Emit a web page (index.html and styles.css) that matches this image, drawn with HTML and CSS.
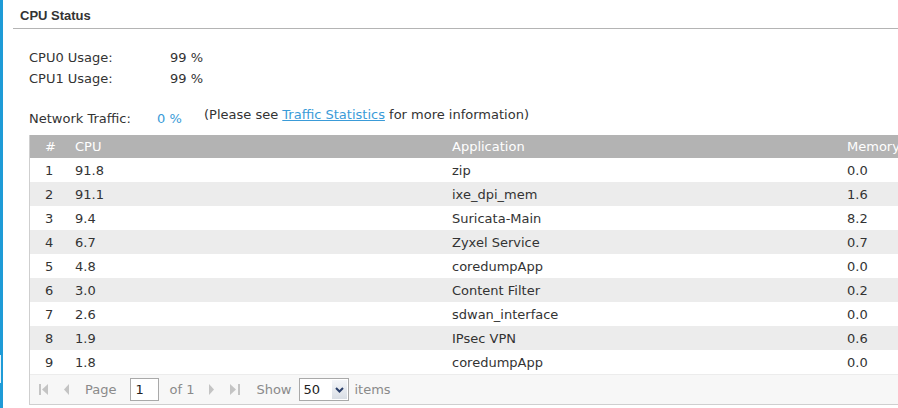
FILE: index.html
```html
<!DOCTYPE html>
<html lang="en">

<head>
    <meta charset="UTF-8">
    <link rel="stylesheet" href="styles.css">
    <title>CPU Status</title>
</head>

<body>
    <div class="page">
        <span class="bar-handle"></span>
        <div class="panel">
            <div class="panel-head">CPU Status</div>
            <div class="panel-body">
                <div class="usage">
                    <span>CPU0 Usage:</span><span>99 %</span>
                    <span>CPU1 Usage:</span><span>99 %</span>
                </div>
                <div class="traffic">
                    <span class="traffic-label">Network Traffic:</span>
                    <span class="traffic-value">0 %</span>
                    <span class="traffic-note">(Please see <a href="#">Traffic Statistics</a> for more information)</span>
                </div>
                <div class="grid">
                    <table>
                        <colgroup>
                            <col style="width: 30px">
                            <col style="width: 377px">
                            <col style="width: 395px">
                            <col>
                        </colgroup>
                        <thead>
                            <tr><th>#</th><th>CPU</th><th>Application</th><th>Memory</th></tr>
                        </thead>
                        <tbody>
                            <tr><td>1</td><td>91.8</td><td>zip</td><td>0.0</td></tr>
                            <tr><td>2</td><td>91.1</td><td>ixe_dpi_mem</td><td>1.6</td></tr>
                            <tr><td>3</td><td>9.4</td><td>Suricata-Main</td><td>8.2</td></tr>
                            <tr><td>4</td><td>6.7</td><td>Zyxel Service</td><td>0.7</td></tr>
                            <tr><td>5</td><td>4.8</td><td>coredumpApp</td><td>0.0</td></tr>
                            <tr><td>6</td><td>3.0</td><td>Content Filter</td><td>0.2</td></tr>
                            <tr><td>7</td><td>2.6</td><td>sdwan_interface</td><td>0.0</td></tr>
                            <tr><td>8</td><td>1.9</td><td>IPsec VPN</td><td>0.6</td></tr>
                            <tr><td>9</td><td>1.8</td><td>coredumpApp</td><td>0.0</td></tr>
                        </tbody>
                    </table>
                    <div class="pager">
                        <svg class="pg-first" width="9" height="11" viewBox="0 0 9 11"><rect x="0" y="0" width="2" height="11"/><path d="M9 0 L3 5.5 L9 11 Z"/></svg>
                        <svg class="pg-prev" width="5" height="11" viewBox="0 0 5 11"><path d="M5 0 L0 5.5 L5 11 Z"/></svg>
                        <span class="pg-text pg-page">Page</span>
                        <span class="pg-input">1</span>
                        <span class="pg-text pg-of">of 1</span>
                        <svg class="pg-next" width="5" height="11" viewBox="0 0 5 11"><path d="M0 0 L5 5.5 L0 11 Z"/></svg>
                        <svg class="pg-last" width="10" height="11" viewBox="0 0 10 11"><path d="M0 0 L6 5.5 L0 11 Z"/><rect x="8" y="0" width="2" height="11"/></svg>
                        <span class="pg-text pg-show">Show</span>
                        <span class="pg-select">
                            <span class="pg-select-val">50</span>
                            <span class="pg-select-btn">
                                <svg width="9" height="6" viewBox="0 0 9 6"><path d="M1 1 L4.5 4.5 L8 1" fill="none" stroke="#2a3f6a" stroke-width="2"/></svg>
                            </span>
                        </span>
                        <span class="pg-text pg-items">items</span>
                    </div>
                </div>
            </div>
        </div>
    </div>
</body>

</html>
```

FILE: styles.css
```css
body {
    margin: 0;
    font-family: "DejaVu Sans", Verdana, sans-serif;
    font-size: 13px;
    color: #333;
    background-color: #fff;
    overflow: hidden;
}

.page {
    position: relative;
    border-left: 3px solid #1e9bd7;
    min-height: 408px;
}

.bar-handle {
    position: absolute;
    left: -3px;
    top: 355px;
    width: 1px;
    height: 28px;
    background-color: #e6f3fa;
}

.panel {
    margin-left: 10px;
}

.panel-head {
    height: 20px;
    padding: 8px 0 0 7px;
    line-height: 16px;
    font-family: "Liberation Sans", Arial, sans-serif;
    font-weight: bold;
    color: #333;
    border-bottom: 1px solid #b4b4b4;
}

.panel-body {
    padding-left: 16px;
}

.usage {
    display: grid;
    grid-template-columns: 141px auto;
    margin-top: 18px;
    line-height: 21px;
}

.traffic {
    display: flex;
    margin-top: 20px;
    line-height: 20px;
}

.traffic-label {
    width: 128px;
}

.traffic-value {
    width: 47px;
    color: #3a9bd8;
}

.traffic-note {
    margin-top: -4px;
}

.traffic-note a {
    color: #3a9bd8;
    text-decoration: underline;
}

.grid {
    width: 920px;
    margin-top: 6px;
    border-left: 1px solid #cfcfcf;
    border-bottom: 1px solid #cfcfcf;
}

table {
    width: 100%;
    border-collapse: collapse;
    table-layout: fixed;
}

th,
td {
    padding: 0 0 0 15px;
    text-align: left;
    white-space: nowrap;
}

th {
    height: 23px;
    font-weight: normal;
    color: #fff;
    background-color: #b3b3b3;
}

td {
    height: 24px;
}

tbody tr:nth-child(even) td {
    background-color: #ececec;
}

.pager {
    display: flex;
    align-items: center;
    height: 29px;
    padding-left: 9px;
    background-color: #f7f7f7;
    border-top: 1px solid #ececec;
    color: #8a8a8a;
}

.pager svg {
    fill: #c4c4c4;
}

.pg-prev {
    margin-left: 16px;
}

.pg-page {
    margin-left: 16px;
}

.pg-input {
    width: 23px;
    height: 21px;
    margin-left: 14px;
    padding-left: 4px;
    line-height: 21px;
    color: #222;
    background-color: #fff;
    border: 1px solid #a9a9a9;
}

.pg-of {
    margin-left: 10px;
}

.pg-next {
    margin-left: 15px;
}

.pg-last {
    margin-left: 16px;
}

.pg-show {
    margin-left: 16px;
}

.pg-select {
    display: flex;
    align-items: center;
    width: 48px;
    height: 21px;
    margin-left: 7px;
    background-color: #fff;
    border: 1px solid #a9a9a9;
}

.pg-select-val {
    flex: 1;
    padding-left: 4px;
    color: #222;
}

.pg-select-btn {
    display: flex;
    align-items: center;
    justify-content: center;
    width: 15px;
    height: 19px;
    margin-right: 1px;
    background: linear-gradient(#f4f6f9, #d9dee5);
}

.pg-items {
    margin-left: 6px;
}
```
